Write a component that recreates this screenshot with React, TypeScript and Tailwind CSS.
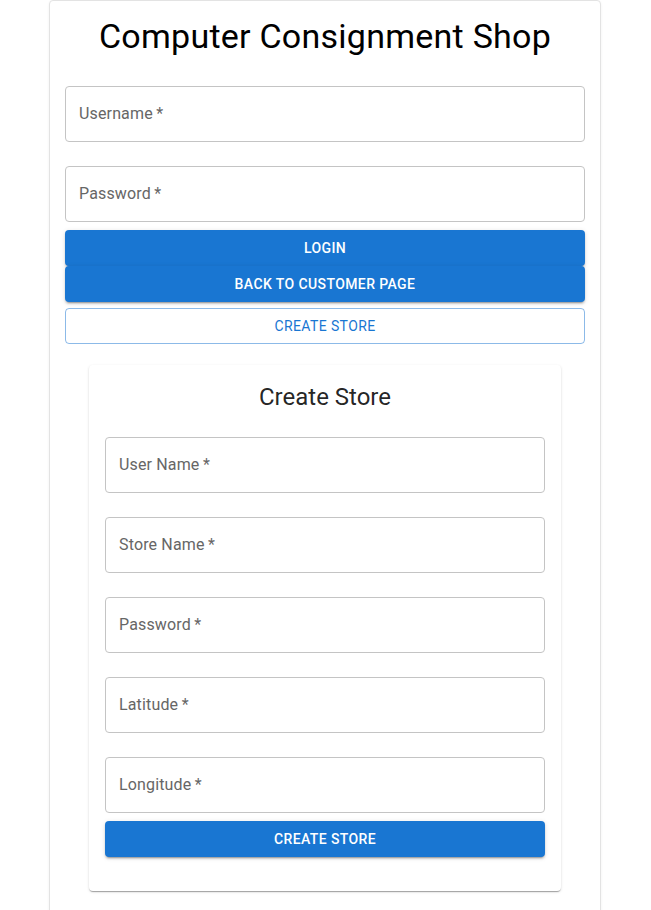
import React from "react";

function Field({ label }: { label: string }) {
  return (
    <div className="flex h-14 w-full items-center rounded-[4px] border border-[#c4c4c4] pr-[14px] pl-[13px]">
      <span className="text-base tracking-[0.15px] text-[#666666]">
        {label}
        {"\u2009*"}
      </span>
    </div>
  );
}

function SolidButton({ children }: { children: React.ReactNode }) {
  return (
    <button
      type="button"
      className="flex h-9 w-full items-center justify-center rounded-[4px] bg-[#1976d2] text-sm font-medium uppercase tracking-[0.4px] text-white shadow-[0_3px_1px_-2px_rgba(0,0,0,0.2),0_2px_2px_0_rgba(0,0,0,0.14),0_1px_5px_0_rgba(0,0,0,0.12)]"
    >
      {children}
    </button>
  );
}

export default function App() {
  return (
    <div className="min-h-[910px] bg-white font-['Roboto',sans-serif] text-[rgba(0,0,0,0.87)]">
      <div className="ml-[49px] min-h-[940px] w-[552px] rounded-[4px] border border-[#e3e3e3] bg-white px-[15px] shadow-[0_1px_3px_rgba(0,0,0,0.06)]">
        <h1 className="mt-[14px] text-center text-[34px] leading-[42px] font-normal tracking-[0.25px] text-black">
          Computer Consignment Shop
        </h1>

        <div className="mt-[29px] flex flex-col gap-6">
          <Field label="Username" />
          <Field label="Password" />
        </div>

        <div className="mt-2 flex flex-col">
          <SolidButton>Login</SolidButton>
          <SolidButton>Back to Customer Page</SolidButton>
          <button
            type="button"
            className="mt-[6px] flex h-9 w-full items-center justify-center rounded-[4px] border border-[rgba(25,118,210,0.5)] text-sm font-normal uppercase tracking-[0.4px] text-[#1976d2]"
          >
            Create Store
          </button>
        </div>

        <div className="mx-auto mt-[21px] w-[472px] rounded-[4px] bg-white px-4 pt-4 pb-[34px] shadow-[0_2px_1px_-1px_rgba(0,0,0,0.2),0_1px_1px_0_rgba(0,0,0,0.14),0_1px_3px_0_rgba(0,0,0,0.12)]">
          <h2 className="text-center text-2xl leading-8 font-normal">Create Store</h2>
          <div className="mt-6 flex flex-col gap-6">
            <Field label="User Name" />
            <Field label="Store Name" />
            <Field label="Password" />
            <Field label="Latitude" />
            <Field label="Longitude" />
          </div>
          <div className="mt-2">
            <SolidButton>Create Store</SolidButton>
          </div>
        </div>
      </div>
    </div>
  );
}
